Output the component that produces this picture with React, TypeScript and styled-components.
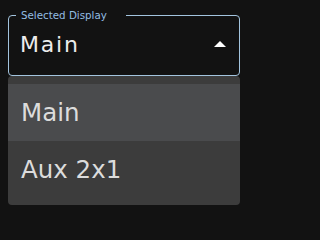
import { FC } from 'react'
import styled, { createGlobalStyle } from 'styled-components'

const GlobalStl = createGlobalStyle`
  html, body {
    margin: 0;
    padding: 0;
    background: #121212;
    font-family: 'DejaVu Sans', 'Liberation Sans', sans-serif;
  }
`

const PageStl = styled.div`
  width: 246px;
  height: 214px;
  padding: 9px 6px 0 8px;
  box-sizing: border-box;
`

const FieldStl = styled.fieldset`
  margin: 0;
  padding: 0 13px 0 7px;
  min-width: 0;
  border: 1px solid #a3c4de;
  border-radius: 4px;
`

const LegendStl = styled.legend`
  padding: 0 19px 0 5px;
  font-size: 10.3px;
  line-height: 12px;
  color: #92bde2;
`

const ValueRowStl = styled.div`
  display: flex;
  align-items: center;
  justify-content: space-between;
  height: 54px;
  padding: 0 0 8px 4px;
  box-sizing: border-box;
`

const ValueStl = styled.span`
  font-size: 22px;
  letter-spacing: 1.8px;
  color: #ececec;
`

const MenuStl = styled.ul`
  list-style: none;
  margin: 0;
  padding: 8px 0 7px;
  background: #3c3c3c;
  border-radius: 4px;
`

const ItemStl = styled.li<{ $active?: boolean }>`
  display: flex;
  align-items: center;
  height: 57px;
  padding-left: 13px;
  font-size: 24.5px;
  color: #dcdcdc;
  background: ${({ $active }) => ($active ? '#4a4b4d' : 'transparent')};
`

const ArrowUp: FC = () => (
  <svg width="12" height="6" viewBox="0 0 12 6">
    <polygon points="0,6 6,0 12,6" fill="#ffffff" />
  </svg>
)

const options = ['Main', 'Aux 2x1']

const App: FC = () => {
  const selected = 'Main'
  return (
    <>
      <GlobalStl />
      <PageStl>
        <FieldStl>
          <LegendStl>Selected Display</LegendStl>
          <ValueRowStl>
            <ValueStl>{selected}</ValueStl>
            <ArrowUp />
          </ValueRowStl>
        </FieldStl>
        <MenuStl>
          {options.map(o => (
            <ItemStl key={o} $active={o === selected}>{o}</ItemStl>
          ))}
        </MenuStl>
      </PageStl>
    </>
  )
}

export default App
